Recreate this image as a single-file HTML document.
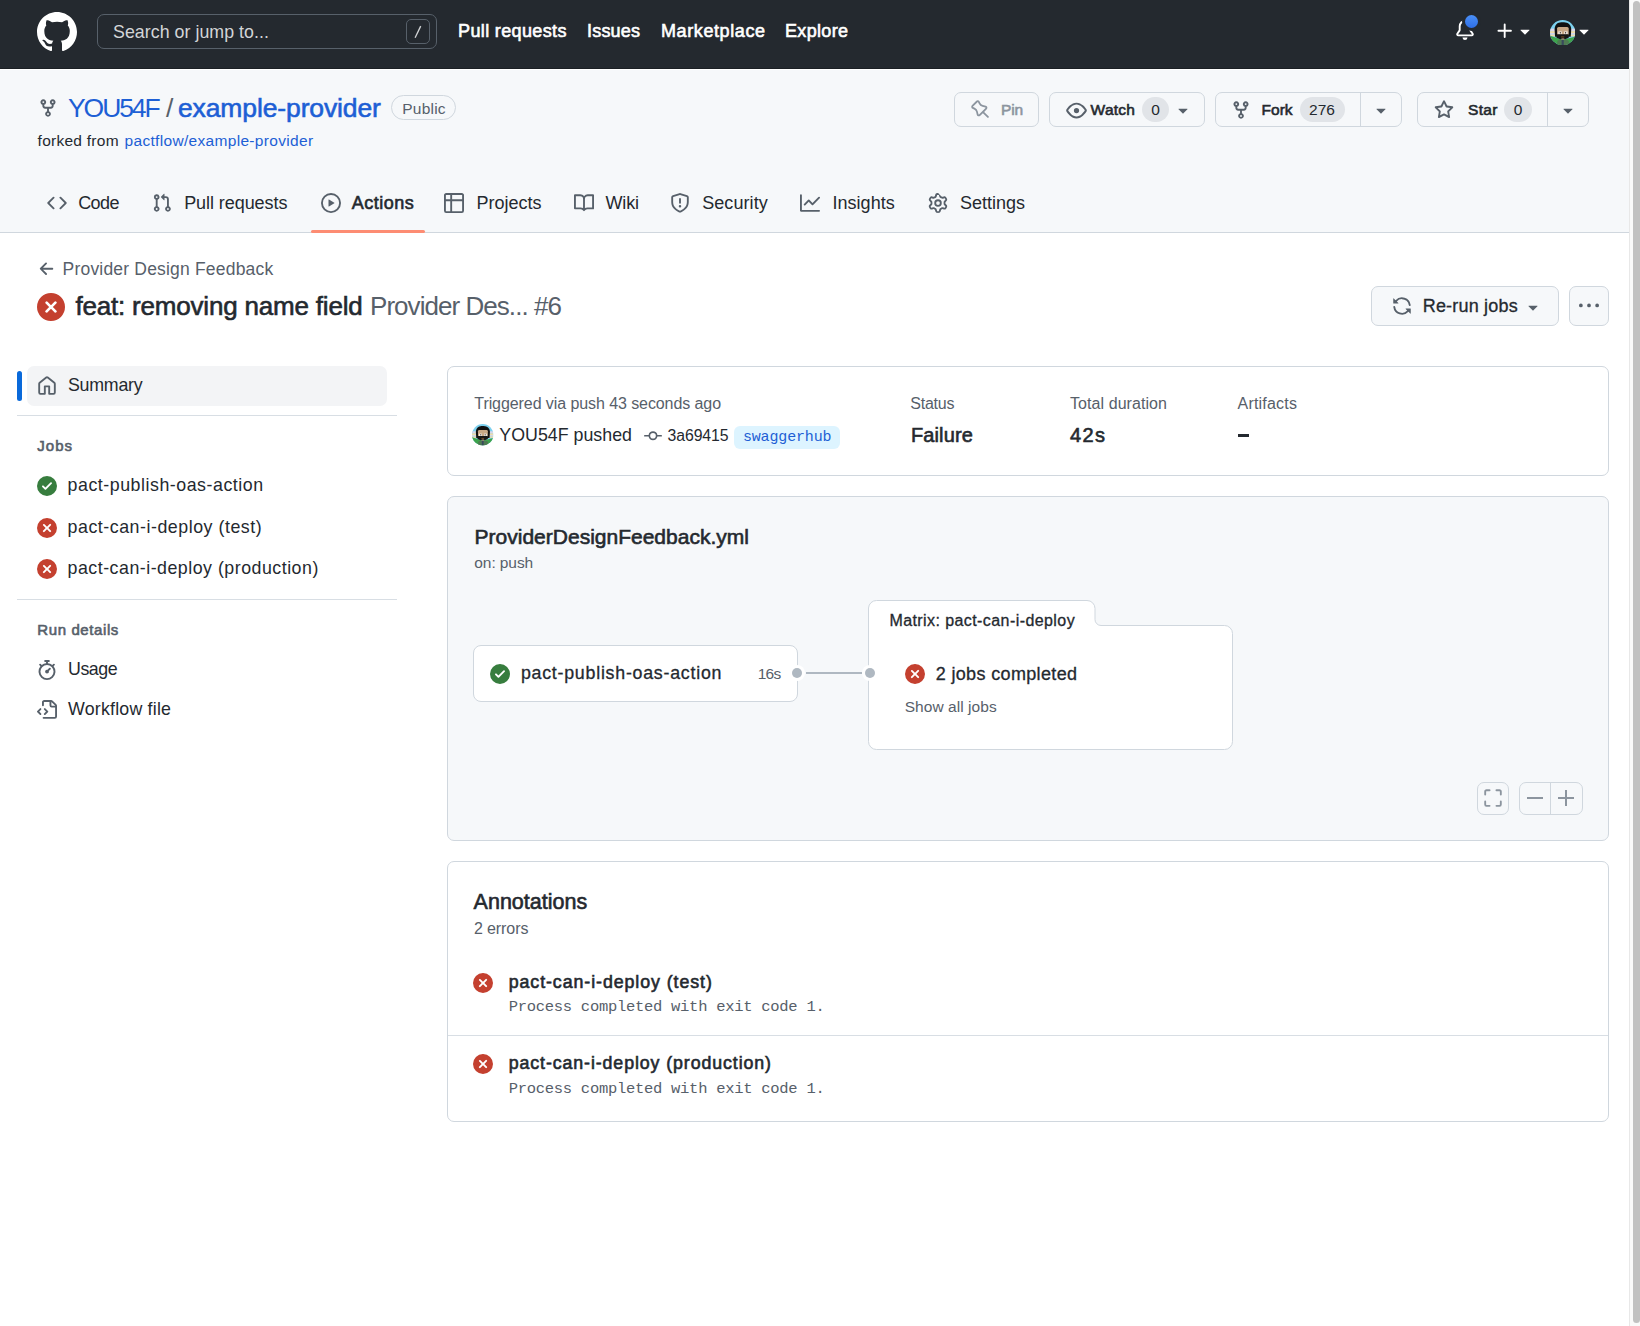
<!DOCTYPE html>
<html><head><meta charset="utf-8"><style>
*{box-sizing:border-box}
html,body{margin:0;padding:0;width:1640px;height:1326px;overflow:hidden;background:#fff}
body{font-family:"Liberation Sans",sans-serif;color:#24292f;position:relative}
.a{position:absolute}
.t{position:absolute;white-space:pre;line-height:1}
.i{position:absolute;display:block}
#hdr{position:absolute;left:0;top:0;width:1629px;height:69px;background:#24292f;border-bottom:1px solid #1b1f24}
#hdrw{position:absolute;left:0;top:69px;width:1629px;height:1px;background:#fff}
#repo{position:absolute;left:0;top:70px;width:1629px;height:163px;background:#f6f8fa;border-bottom:1px solid #d0d7de}
#sb{position:absolute;left:1629px;top:0;width:11px;height:1326px;background:#fafafa;border-left:1px solid #e8e8e8}
#sb .th{position:absolute;left:3px;top:1px;width:7px;height:1322px;background:#c1c1c1;border-radius:4px}
.btn{position:absolute;border:1px solid #d0d7de;border-radius:7px;background:#f6f8fa;height:35px}
.box{position:absolute;border:1px solid #d0d7de;border-radius:7px;background:#fff}
</style></head><body>
<div id="hdr"></div><div id="hdrw"></div>
<div id="repo"></div>
<svg class="i" style="left:37px;top:12px;" width="40" height="40" viewBox="0 0 16 16" fill="#ffffff" fill-rule="evenodd"><path d="M8 0C3.58 0 0 3.58 0 8c0 3.54 2.29 6.53 5.47 7.59.4.07.55-.17.55-.38 0-.19-.01-.82-.01-1.49-2.01.37-2.53-.49-2.69-.94-.09-.23-.48-.94-.82-1.13-.28-.15-.68-.52-.01-.53.63-.01 1.08.58 1.23.82.72 1.21 1.870.87 2.33.66.07-.52.28-.87.51-1.07-1.78-.2-3.64-.89-3.64-3.95 0-.87.31-1.59.82-2.15-.08-.2-.36-1.02.08-2.12 0 0 .67-.21 2.2.82.64-.18 1.32-.27 2-.27.68 0 1.36.09 2 .27 1.53-1.04 2.2-.82 2.2-.82.44 1.1.16 1.92.08 2.12.51.56.82 1.27.82 2.15 0 3.070-1.87 3.75-3.65 3.95.29.25.54.73.54 1.48 0 1.07-.01 1.93-.01 2.2 0 .21.15.46.55.38A8.013 8.013 0 0016 8c0-4.42-3.58-8-8-8z"/></svg>
<div class="a" style="left:97px;top:14px;width:340px;height:35px;border:1px solid #57606a;border-radius:7px"></div>
<div class="a" style="left:406px;top:19px;width:24px;height:25px;border:1px solid #57606a;border-radius:5px"></div>
<svg class="i" style="left:410px;top:22px" width="16" height="18"><line x1="10.7" y1="4.1" x2="5.1" y2="15.8" stroke="#d3d5d7" stroke-width="1.3"/></svg>
<svg class="i" style="left:1455px;top:20px;" width="20" height="20" viewBox="0 0 16 16" fill="#ffffff" fill-rule="evenodd"><path d="M8 16a2 2 0 001.985-1.75c.017-.137-.097-.25-.235-.25h-3.5c-.138 0-.252.113-.235.25A2 2 0 008 16zM3 5a5 5 0 0110 0v2.947c0 .05.015.098.042.139l1.703 2.555A1.518 1.518 0 0113.482 13H2.518a1.518 1.518 0 01-1.263-2.36l1.703-2.554A.25.25 0 003 7.947V5zm5-3.5A3.5 3.5 0 004.5 5v2.947c0 .346-.102.683-.294.97l-1.703 2.556a.018.018 0 00-.003.01l.001.006c0 .002.002.004.004.006a.017.017 0 00.006.004l.007.001h10.964l.007-.001a.016.016 0 00.006-.004.016.016 0 00.004-.006l.001-.007a.017.017 0 00-.003-.01l-1.703-2.554a1.75 1.75 0 01-.294-.97V5A3.5 3.5 0 008 1.5z"/></svg>
<div class="a" style="left:1462px;top:12px;width:19px;height:19px;border-radius:50%;background:#3b82f6;border:3px solid #24292f;background:linear-gradient(#4a8ff7,#2f6fe6)"></div>
<svg class="i" style="left:1495px;top:20.5px;" width="20" height="20" viewBox="0 0 16 16" fill="#ffffff" fill-rule="evenodd"><path d="M7.75 2a.75.75 0 01.75.75V7h4.25a.75.75 0 110 1.5H8.5v4.25a.75.75 0 11-1.5 0V8.5H2.75a.75.75 0 010-1.5H7V2.75A.75.75 0 017.75 2z"/></svg>
<svg class="i" style="left:1515px;top:21px;" width="20" height="20" viewBox="0 0 16 16" fill="#ffffff" fill-rule="evenodd"><path d="M4.427 7.427l3.396 3.396a.25.25 0 00.354 0l3.396-3.396A.25.25 0 0011.396 7H4.604a.25.25 0 00-.177.427z"/></svg>
<svg class="i" style="left:1550px;top:20px" width="25.3" height="25.3" viewBox="0 0 25 25"><defs><clipPath id="cp1550"><circle cx="12.5" cy="12.5" r="12.5"/></clipPath></defs><g clip-path="url(#cp1550)"><rect width="25" height="25" fill="#7cd0ee"/><rect y="8.5" width="25" height="2.5" fill="#d9d6ea"/><rect y="11" width="25" height="2" fill="#efdcaa"/><rect y="13" width="25" height="1.6" fill="#d9d6ea"/><rect y="14.6" width="25" height="1.6" fill="#efdcaa"/><path d="M0 15.5 L12.5 19.5 L12.5 25 L0 25 Z" fill="#3ea34c"/><path d="M25 16.5 L12.5 19.5 L12.5 25 L25 25 Z" fill="#3ea34c"/><path d="M4.5 9 C5 3 9 2.3 12.5 2.3 C16 2.3 20.5 3 21 9 L20.5 16.5 L5 16.5 Z" fill="#111"/><rect x="7" y="7" width="11.5" height="8.5" rx="1.5" fill="#c8a886"/><rect x="8.3" y="11.3" width="3.2" height="2.8" fill="#f4f4f4"/><rect x="14.1" y="11.3" width="3.2" height="2.8" fill="#f4f4f4"/><rect x="9.6" y="11.8" width="1.2" height="1.6" fill="#5a4a3a"/><rect x="14.8" y="11.8" width="1.2" height="1.6" fill="#5a4a3a"/><path d="M6.4 14 H18.5 V17.5 L15 19 H10 L6.4 17.5 Z" fill="#161616"/><rect x="11" y="16.3" width="3.1" height="0.9" fill="#8a5a2a"/><rect x="11.3" y="18.2" width="2.8" height="2" fill="#b89a7c"/><path d="M7.2 25 L7.2 21 Q8 19.6 11 19.6 L14.5 19.6 Q17.8 19.6 18.7 21 L18.7 25 Z" fill="#4f7a52"/><rect x="11.5" y="19.6" width="2.1" height="5.4" fill="#39485e"/></g></svg>
<svg class="i" style="left:1574px;top:21px;" width="20" height="20" viewBox="0 0 16 16" fill="#ffffff" fill-rule="evenodd"><path d="M4.427 7.427l3.396 3.396a.25.25 0 00.354 0l3.396-3.396A.25.25 0 0011.396 7H4.604a.25.25 0 00-.177.427z"/></svg>
<svg class="i" style="left:37.5px;top:98px;" width="20" height="20" viewBox="0 0 16 16" fill="#57606a" fill-rule="evenodd"><path d="M5 5.372v.878c0 .414.336.75.75.75h4.5a.75.75 0 00.75-.75v-.878a2.25 2.25 0 111.5 0v.878a2.25 2.25 0 01-2.25 2.25h-1.5v2.128a2.251 2.251 0 11-1.5 0V8.5h-1.5A2.25 2.25 0 013.5 6.25v-.878a2.25 2.25 0 111.5 0zM5 3.25a.75.75 0 10-1.5 0 .75.75 0 001.5 0zm6.75.75a.75.75 0 100-1.5.75.75 0 000 1.5zm-3 8.75a.75.75 0 10-1.5 0 .75.75 0 001.5 0z"/></svg>
<div class="a" style="left:391px;top:95px;width:65px;height:25px;border:1px solid #d0d7de;border-radius:13px"></div>
<div class="btn" style="left:954px;top:92px;width:85px"></div>
<svg class="i" style="left:971px;top:100px;" width="19" height="19" viewBox="0 0 16 16" fill="#8c959f" fill-rule="evenodd"><path d="M4.456.734a1.75 1.75 0 012.826.504l.613 1.327a3.081 3.081 0 002.084 1.707l2.454.584c1.332.317 1.8 1.972.832 2.94L11.06 10l3.72 3.72a.75.75 0 11-1.061 1.06L10 11.06l-2.204 2.205c-.968.968-2.623.5-2.94-.832l-.584-2.454a3.081 3.081 0 00-1.707-2.084l-1.327-.613a1.75 1.75 0 01-.504-2.826L4.456.734zM5.92 1.866a.25.25 0 00-.404-.072L1.794 5.516a.25.25 0 00.072.404l1.328.613A4.582 4.582 0 015.73 9.63l.584 2.454a.25.25 0 00.42.12l5.47-5.47a.25.25 0 00-.12-.42L9.63 5.73a4.581 4.581 0 01-3.098-2.537L5.92 1.866z"/></svg>
<div class="btn" style="left:1049px;top:92px;width:156px"></div>
<svg class="i" style="left:1065.5px;top:100px;" width="21" height="21" viewBox="0 0 16 16" fill="#57606a" fill-rule="evenodd"><path d="M1.679 7.932c.412-.621 1.242-1.75 2.366-2.717C5.175 4.242 6.527 3.5 8 3.5c1.473 0 2.824.742 3.955 1.715 1.124.967 1.954 2.096 2.366 2.717a.119.119 0 010 .136c-.412.621-1.242 1.75-2.366 2.717C10.825 11.758 9.473 12.5 8 12.5c-1.473 0-2.824-.742-3.955-1.715C2.92 9.818 2.09 8.690 1.679 8.068a.119.119 0 010-.136zM8 2c-1.981 0-3.67.992-4.933 2.078C1.797 5.169.88 6.423.43 7.1a1.619 1.619 0 000 1.798c.45.678 1.367 1.932 2.637 3.024C4.329 13.008 6.019 14 8 14c1.981 0 3.67-.992 4.933-2.078 1.27-1.091 2.187-2.345 2.637-3.023a1.619 1.619 0 000-1.798c-.45-.678-1.367-1.932-2.637-3.023C11.671 2.992 9.981 2 8 2zm0 8a2 2 0 100-4 2 2 0 000 4z"/></svg>
<div class="a" style="left:1142px;top:97px;width:27px;height:25px;border-radius:13px;background:#e1e4e8"></div>
<svg class="i" style="left:1173px;top:100px;" width="20" height="20" viewBox="0 0 16 16" fill="#57606a" fill-rule="evenodd"><path d="M4.427 7.427l3.396 3.396a.25.25 0 00.354 0l3.396-3.396A.25.25 0 0011.396 7H4.604a.25.25 0 00-.177.427z"/></svg>
<div class="btn" style="left:1215px;top:92px;width:187px"></div>
<div class="a" style="left:1360px;top:92px;width:1px;height:35px;background:#d0d7de"></div>
<svg class="i" style="left:1230.5px;top:100px;" width="20" height="20" viewBox="0 0 16 16" fill="#57606a" fill-rule="evenodd"><path d="M5 5.372v.878c0 .414.336.75.75.75h4.5a.75.75 0 00.75-.75v-.878a2.25 2.25 0 111.5 0v.878a2.25 2.25 0 01-2.25 2.25h-1.5v2.128a2.251 2.251 0 11-1.5 0V8.5h-1.5A2.25 2.25 0 013.5 6.25v-.878a2.25 2.25 0 111.5 0zM5 3.25a.75.75 0 10-1.5 0 .75.75 0 001.5 0zm6.75.75a.75.75 0 100-1.5.75.75 0 000 1.5zm-3 8.75a.75.75 0 10-1.5 0 .75.75 0 001.5 0z"/></svg>
<div class="a" style="left:1300px;top:97px;width:45px;height:25px;border-radius:13px;background:#e1e4e8"></div>
<svg class="i" style="left:1370.5px;top:100px;" width="20" height="20" viewBox="0 0 16 16" fill="#57606a" fill-rule="evenodd"><path d="M4.427 7.427l3.396 3.396a.25.25 0 00.354 0l3.396-3.396A.25.25 0 0011.396 7H4.604a.25.25 0 00-.177.427z"/></svg>
<div class="btn" style="left:1417px;top:92px;width:172px"></div>
<div class="a" style="left:1547px;top:92px;width:1px;height:35px;background:#d0d7de"></div>
<svg class="i" style="left:1434px;top:100px;" width="20" height="20" viewBox="0 0 16 16" fill="#57606a" fill-rule="evenodd"><path d="M8 .25a.75.75 0 01.673.418l1.882 3.815 4.21.612a.75.75 0 01.416 1.279l-3.046 2.97.719 4.192a.75.75 0 01-1.088.791L8 12.347l-3.766 1.98a.75.75 0 01-1.088-.79l.72-4.194L.818 6.374a.75.75 0 01.416-1.28l4.21-.611L7.327.668A.75.75 0 018 .25zm0 2.445L6.615 5.5a.75.75 0 01-.564.41l-3.097.45 2.24 2.184a.75.75 0 01.216.664l-.528 3.084 2.769-1.456a.75.75 0 01.698 0l2.77 1.456-.53-3.084a.75.75 0 01.216-.664l2.24-2.183-3.096-.45a.75.75 0 01-.564-.41L8 2.694v.001z"/></svg>
<div class="a" style="left:1504px;top:97px;width:28px;height:25px;border-radius:13px;background:#e1e4e8"></div>
<svg class="i" style="left:1557.5px;top:100px;" width="20" height="20" viewBox="0 0 16 16" fill="#57606a" fill-rule="evenodd"><path d="M4.427 7.427l3.396 3.396a.25.25 0 00.354 0l3.396-3.396A.25.25 0 0011.396 7H4.604a.25.25 0 00-.177.427z"/></svg>
<svg class="i" style="left:47px;top:193px;" width="20" height="20" viewBox="0 0 16 16" fill="#57606a" fill-rule="evenodd"><path d="M4.72 3.22a.75.75 0 011.06 1.06L2.06 8l3.72 3.72a.75.75 0 11-1.06 1.06L.47 8.53a.75.75 0 010-1.06l4.25-4.25zm6.56 0a.75.75 0 10-1.06 1.06L13.94 8l-3.72 3.720a.75.75 0 101.06 1.06l4.25-4.25a.75.75 0 000-1.06l-4.25-4.25z"/></svg>
<svg class="i" style="left:151.5px;top:193px;" width="20" height="20" viewBox="0 0 16 16" fill="#57606a" fill-rule="evenodd"><path d="M7.177 3.073L9.573.677A.25.25 0 0110 .854v4.792a.25.25 0 01-.427.177L7.177 3.427a.25.25 0 010-.354zM3.75 2.5a.75.75 0 100 1.5.75.75 0 000-1.5zm-2.25.75a2.25 2.25 0 113 2.122v5.256a2.251 2.251 0 11-1.5 0V5.372A2.25 2.25 0 011.5 3.25zM11 2.5h-1V4h1a1 1 0 011 1v5.628a2.251 2.251 0 101.5 0V5A2.5 2.5 0 0011 2.5zm1 10.25a.75.75 0 111.5 0 .75.75 0 01-1.5 0zM3.75 12a.75.75 0 100 1.5.75.75 0 000-1.5z"/></svg>
<svg class="i" style="left:320.75px;top:193px;" width="20" height="20" viewBox="0 0 16 16" fill="#57606a" fill-rule="evenodd"><path d="M1.5 8a6.5 6.5 0 1113 0 6.5 6.5 0 01-13 0zM8 0a8 8 0 100 16A8 8 0 008 0zM6.379 5.227A.25.25 0 006 5.442v5.117a.25.25 0 00.379.214l4.264-2.559a.25.25 0 000-.428L6.379 5.227z"/></svg>
<svg class="i" style="left:444px;top:193px;" width="20" height="20" viewBox="0 0 16 16" fill="#57606a" fill-rule="evenodd"><path d="M0 1.75C0 .784.784 0 1.75 0h12.5C15.216 0 16 .784 16 1.75v12.5A1.75 1.75 0 0114.25 16H1.75A1.75 1.75 0 010 14.250V1.75zM6.5 6.5v8h7.75a.25.25 0 00.25-.25V6.5h-8zm8-1.5V1.750a.25.25 0 00-.25-.25H6.5V5h8zM5 1.5H1.75a.25.25 0 00-.25.25V5H5V1.5zm-3.5 5v7.75c0 .138.112.25.25.25H5v-8H1.5z"/></svg>
<svg class="i" style="left:574px;top:193px;" width="20" height="20" viewBox="0 0 16 16" fill="#57606a" fill-rule="evenodd"><path d="M0 1.75A.75.75 0 01.75 1h4.253c1.227 0 2.317.59 3 1.501A3.744 3.744 0 0111.006 1h4.245a.75.75 0 01.75.75v10.5a.75.75 0 01-.75.75h-4.507a2.25 2.25 0 00-1.591.659l-.622.621a.75.75 0 01-1.06 0l-.622-.621A2.25 2.25 0 005.258 13H.75a.75.75 0 01-.75-.75V1.75zm8.755 3a2.25 2.25 0 012.25-2.25H14.5v9h-3.757c-.71 0-1.4.201-1.992.572l.004-7.322zm-1.504 7.324l.004-5.073-.002-2.253A2.25 2.25 0 005.003 2.5H1.5v9h3.757a3.75 3.75 0 011.994.574z"/></svg>
<svg class="i" style="left:670px;top:193px;" width="20" height="20" viewBox="0 0 16 16" fill="#57606a" fill-rule="evenodd"><path d="M7.467.133a1.75 1.75 0 011.066 0l5.25 1.68A1.75 1.75 0 0115 3.48V7c0 1.566-.32 3.182-1.303 4.682-.983 1.498-2.585 2.813-5.032 3.855a1.7 1.7 0 01-1.33 0c-2.447-1.042-4.049-2.357-5.032-3.855C1.32 10.182 1 8.566 1 7V3.48a1.75 1.75 0 011.217-1.667l5.25-1.68zm.61 1.429a.25.25 0 00-.153 0l-5.25 1.68a.25.25 0 00-.174.238V7c0 1.358.275 2.666 1.057 3.86.784 1.194 2.121 2.34 4.366 3.297a.2.2 0 00.154 0c2.245-.956 3.582-2.104 4.366-3.298C13.225 9.666 13.5 8.36 13.5 7V3.48a.25.25 0 00-.174-.237l-5.25-1.68zM9 10.5a1 1 0 11-2 0 1 1 0 012 0zm-.25-5.75a.75.75 0 10-1.5 0v3a.75.75 0 001.5 0v-3z"/></svg>
<svg class="i" style="left:800px;top:193px;" width="20" height="20" viewBox="0 0 16 16" fill="#57606a" fill-rule="evenodd"><path d="M1.5 1.75a.75.75 0 00-1.5 0v12.5c0 .414.336.75.75.75h14.5a.75.75 0 000-1.5H1.5V1.75zm14.28 2.53a.75.75 0 00-1.06-1.060L10 7.94 7.53 5.47a.75.75 0 00-1.06 0L3.22 8.72a.75.75 0 001.06 1.06L7 7.06l2.47 2.47a.75.75 0 001.06 0l5.25-5.25z"/></svg>
<svg class="i" style="left:928px;top:193px;" width="20" height="20" viewBox="0 0 16 16" fill="#57606a" fill-rule="evenodd"><path d="M7.429 1.525a6.593 6.593 0 011.142 0c.036.003.108.036.137.146l.289 1.105c.147.561.549.967.998 1.204.17.086.334.183.49.29.417.282.97.423 1.53.27l1.102-.303c.11-.03.175.016.195.046.219.31.41.641.573.989.014.031.022.11-.059.19l-.815.806c-.411.406-.562.957-.53 1.456a4.588 4.588 0 010 .582c-.032.499.119 1.05.53 1.456l.815.806c.08.08.073.159.059.19a6.494 6.494 0 01-.573.99c-.02.029-.086.074-.195.045l-1.103-.303c-.559-.153-1.112-.012-1.529.27-.156.107-.32.204-.49.29-.449.236-.851.643-.998 1.204l-.289 1.105c-.029.11-.101.143-.137.146a6.613 6.613 0 01-1.142 0c-.036-.003-.108-.037-.137-.146l-.289-1.105c-.147-.561-.549-.967-.998-1.204a4.502 4.502 0 01-.49-.29c-.417-.282-.97-.423-1.53-.27l-1.102.303c-.11.03-.175-.016-.195-.046a6.492 6.492 0 01-.573-.989c-.014-.031-.022-.11.059-.19l.815-.806c.411-.406.562-.957.53-1.456a4.587 4.587 0 010-.582c.032-.499-.119-1.05-.53-1.456l-.815-.806c-.08-.08-.073-.159-.059-.19a6.44 6.44 0 01.573-.99c.02-.029.086-.075.195-.045l1.103.303c.559.153 1.112.012 1.529-.27.156-.107.32-.204.49-.29.449-.236.851-.643.998-1.204l.289-1.105c.029-.11.101-.143.137-.146zM8 0c-.236 0-.47.01-.701.03-.743.065-1.29.615-1.458 1.261l-.29 1.106c-.017.066-.078.158-.211.229a5.96 5.96 0 00-.613.363c-.125.085-.235.09-.3.073l-1.102-.303c-.644-.176-1.392.021-1.82.63a8.12 8.12 0 00-.704 1.217c-.315.675-.111 1.422.363 1.891l.815.806c.05.048.098.147.088.294a6.084 6.084 0 000 .727c.01.147-.038.246-.088.294l-.815.806c-.474.469-.678 1.216-.363 1.891.2.428.436.835.704 1.218.428.609 1.176.806 1.82.63l1.103-.303c.066-.019.176-.011.3.071.196.133.401.254.613.363.133.071.194.163.212.229l.289 1.106c.169.646.715 1.196 1.458 1.26a8.094 8.094 0 001.402 0c.743-.064 1.29-.614 1.458-1.26l.29-1.106c.017-.066.078-.158.211-.229a5.98 5.98 0 00.613-.363c.125-.085.235-.09.3-.073l1.102.303c.644.176 1.392-.021 1.82-.63.268-.382.505-.789.704-1.217.315-.675.111-1.422-.364-1.891l-.814-.806c-.05-.048-.098-.147-.088-.294a6.1 6.1 0 000-.727c-.01-.147.039-.246.088-.294l.814-.806c.475-.469.679-1.216.364-1.891a8.1 8.1 0 00-.704-1.218c-.428-.609-1.176-.806-1.82-.63l-1.103.303c-.066.019-.176.011-.3-.071a5.991 5.991 0 00-.613-.363c-.133-.071-.194-.163-.212-.229L9.16 1.29C8.99.645 8.444.095 7.701.031A8.094 8.094 0 008 0zm1.5 8a1.5 1.5 0 11-3 0 1.5 1.5 0 013 0zM11 8a3 3 0 11-6 0 3 3 0 016 0z"/></svg>
<div class="a" style="left:311px;top:229.5px;width:114px;height:3px;background:#fd8c73;border-radius:2px"></div>
<svg class="i" style="left:36.5px;top:258.5px;" width="20" height="20" viewBox="0 0 16 16" fill="#57606a" fill-rule="evenodd"><path d="M7.78 12.53a.75.75 0 01-1.06 0L2.47 8.28a.75.75 0 010-1.06l4.25-4.25a.75.75 0 011.06 1.06L4.81 7h7.440a.75.75 0 010 1.5H4.81l2.97 2.97a.75.75 0 010 1.06z"/></svg>
<svg class="i" style="left:37px;top:292.5px;" width="28" height="28" viewBox="0 0 16 16" fill="#c4402f" fill-rule="evenodd"><path d="M2.343 13.657A8 8 0 1113.657 2.343 8 8 0 012.343 13.657zM6.03 4.97a.75.75 0 00-1.06 1.06L6.94 8 4.97 9.970a.75.75 0 101.06 1.06L8 9.06l1.97 1.97a.75.75 0 101.06-1.06L9.06 8l1.97-1.97a.75.75 0 10-1.06-1.06L8 6.94 6.03 4.97z"/></svg>
<div class="btn" style="left:1371px;top:286px;width:188px;height:40px"></div>
<svg class="i" style="left:1392px;top:295.5px;" width="20" height="20" viewBox="0 0 16 16" fill="#57606a" fill-rule="evenodd"><path d="M1.705 8.005a.75.75 0 01.834.656 5.5 5.5 0 009.592 2.97l-1.204-1.204a.25.25 0 01.177-.427h3.646a.25.25 0 01.25.25v3.646a.25.25 0 01-.427.177l-1.38-1.38A7.001 7.001 0 011.05 8.84a.75.75 0 01.656-.834zM8 2.5a5.487 5.487 0 00-4.131 1.869l1.204 1.204A.25.25 0 014.896 6H1.25A.25.25 0 011 5.75V2.104a.25.25 0 01.427-.177l1.38 1.38A7.001 7.001 0 0114.95 7.16a.75.75 0 11-1.49.178A5.501 5.501 0 008 2.5z"/></svg>
<svg class="i" style="left:1523px;top:297px;" width="20" height="20" viewBox="0 0 16 16" fill="#57606a" fill-rule="evenodd"><path d="M4.427 7.427l3.396 3.396a.25.25 0 00.354 0l3.396-3.396A.25.25 0 0011.396 7H4.604a.25.25 0 00-.177.427z"/></svg>
<div class="btn" style="left:1569px;top:286px;width:40px;height:40px"></div>
<svg class="i" style="left:1579px;top:296px;" width="20" height="20" viewBox="0 0 16 16" fill="#57606a" fill-rule="evenodd"><path d="M8 9a1.5 1.5 0 100-3 1.5 1.5 0 000 3zM1.5 9a1.5 1.5 0 100-3 1.5 1.5 0 000 3zm13 0a1.5 1.5 0 100-3 1.5 1.5 0 000 3z"/></svg>
<div class="a" style="left:27px;top:366px;width:360px;height:40px;border-radius:7px;background:#f3f4f6"></div>
<div class="a" style="left:17px;top:371px;width:5px;height:30px;border-radius:3px;background:#0969da"></div>
<svg class="i" style="left:37px;top:376px;" width="20" height="20" viewBox="0 0 16 16" fill="#57606a" fill-rule="evenodd"><path d="M6.906.664a1.749 1.749 0 012.187 0l5.25 4.2c.415.332.657.835.657 1.367v7.019A1.75 1.75 0 0113.25 15h-3.5a.75.75 0 01-.75-.75V9H7v5.25a.75.75 0 01-.75.75h-3.5A1.75 1.75 0 011 13.25V6.23c0-.531.242-1.034.657-1.366l5.25-4.2h-.001zm1.25 1.171a.25.25 0 00-.312 0l-5.25 4.2a.25.25 0 00-.094.196v7.019c0 .138.112.25.25.25H5.5V8.25a.75.75 0 01.75-.75h3.5a.75.75 0 01.75.75v5.25h2.75a.25.25 0 00.25-.25V6.23a.25.25 0 00-.094-.195l-5.25-4.2z"/></svg>
<div class="a" style="left:17px;top:415px;width:380px;height:1px;background:#d8dee4"></div>
<svg class="i" style="left:37px;top:476px;" width="20" height="20" viewBox="0 0 16 16" fill="#377d3e" fill-rule="evenodd"><path d="M8 16A8 8 0 108 0a8 8 0 000 16zm3.78-9.72a.75.75 0 00-1.060-1.06L6.75 9.19 5.28 7.72a.75.75 0 00-1.06 1.06l2 2a.75.75 0 001.06 0l4.5-4.5z"/></svg>
<svg class="i" style="left:37px;top:518px;" width="20" height="20" viewBox="0 0 16 16" fill="#c4402f" fill-rule="evenodd"><path d="M2.343 13.657A8 8 0 1113.657 2.343 8 8 0 012.343 13.657zM6.03 4.97a.75.75 0 00-1.06 1.06L6.94 8 4.97 9.970a.75.75 0 101.06 1.06L8 9.06l1.97 1.97a.75.75 0 101.06-1.06L9.06 8l1.97-1.97a.75.75 0 10-1.06-1.06L8 6.94 6.03 4.97z"/></svg>
<svg class="i" style="left:37px;top:559px;" width="20" height="20" viewBox="0 0 16 16" fill="#c4402f" fill-rule="evenodd"><path d="M2.343 13.657A8 8 0 1113.657 2.343 8 8 0 012.343 13.657zM6.03 4.97a.75.75 0 00-1.06 1.06L6.94 8 4.97 9.970a.75.75 0 101.06 1.06L8 9.06l1.97 1.97a.75.75 0 101.06-1.06L9.06 8l1.97-1.97a.75.75 0 10-1.06-1.06L8 6.94 6.03 4.97z"/></svg>
<div class="a" style="left:17px;top:599px;width:380px;height:1px;background:#d8dee4"></div>
<svg class="i" style="left:37px;top:660px;" width="20" height="20" viewBox="0 0 16 16" fill="#57606a" fill-rule="evenodd"><path d="M5.75.75A.75.75 0 016.5 0h3a.75.75 0 010 1.5h-.75v1l-.001.041a6.718 6.718 0 013.464 1.435l.007-.006.75-.75a.75.75 0 111.06 1.06l-.75.75-.006.007a6.75 6.75 0 11-10.548 0L2.72 5.03l-.75-.75a.75.75 0 011.06-1.060l.75.75.007.006A6.718 6.718 0 017.25 2.541a.756.756 0 010-.041v-1H6.5a.75.75 0 01-.75-.75zM8 14.5A5.25 5.25 0 108 4a5.25 5.25 0 000 10.5zm.389-6.7l1.33-1.33a.75.75 0 111.061 1.06L9.45 8.861A1.502 1.502 0 018 10.75a1.5 1.5 0 11.389-2.95z"/></svg>
<svg class="i" style="left:37px;top:700px;" width="20" height="20" viewBox="0 0 16 16" fill="#57606a" fill-rule="evenodd"><path d="M4 1.75C4 .784 4.784 0 5.75 0h5.586c.464 0 .909.184 1.237.513l2.914 2.914c.329.328.513.773.513 1.237v8.586A1.75 1.75 0 0114.25 15h-9a.75.75 0 010-1.5h9a.25.25 0 00.25-.25V6h-2.75A1.75 1.75 0 0110 4.25V1.5H5.750a.25.25 0 00-.25.25v2.5a.75.75 0 01-1.5 0v-2.5zm7.5-.188V4.25c0 .138.112.25.25.25h2.688a.252.252 0 00-.011-.013l-2.914-2.914a.272.272 0 00-.013-.011zM5.72 6.72a.75.75 0 000 1.06l1.47 1.47-1.47 1.47a.75.75 0 101.06 1.06l2-2a.75.75 0 000-1.06l-2-2a.75.75 0 00-1.06 0zM3.28 7.78a.75.75 0 00-1.06-1.06l-2 2a.75.75 0 000 1.06l2 2a.75.75 0 001.06-1.06L1.81 9.25l1.47-1.47z"/></svg>
<div class="box" style="left:447px;top:366px;width:1162px;height:110px"></div>
<svg class="i" style="left:472.4px;top:424.3px" width="21.4" height="21.4" viewBox="0 0 25 25"><defs><clipPath id="cp472"><circle cx="12.5" cy="12.5" r="12.5"/></clipPath></defs><g clip-path="url(#cp472)"><rect width="25" height="25" fill="#7cd0ee"/><rect y="8.5" width="25" height="2.5" fill="#d9d6ea"/><rect y="11" width="25" height="2" fill="#efdcaa"/><rect y="13" width="25" height="1.6" fill="#d9d6ea"/><rect y="14.6" width="25" height="1.6" fill="#efdcaa"/><path d="M0 15.5 L12.5 19.5 L12.5 25 L0 25 Z" fill="#3ea34c"/><path d="M25 16.5 L12.5 19.5 L12.5 25 L25 25 Z" fill="#3ea34c"/><path d="M4.5 9 C5 3 9 2.3 12.5 2.3 C16 2.3 20.5 3 21 9 L20.5 16.5 L5 16.5 Z" fill="#111"/><rect x="7" y="7" width="11.5" height="8.5" rx="1.5" fill="#c8a886"/><rect x="8.3" y="11.3" width="3.2" height="2.8" fill="#f4f4f4"/><rect x="14.1" y="11.3" width="3.2" height="2.8" fill="#f4f4f4"/><rect x="9.6" y="11.8" width="1.2" height="1.6" fill="#5a4a3a"/><rect x="14.8" y="11.8" width="1.2" height="1.6" fill="#5a4a3a"/><path d="M6.4 14 H18.5 V17.5 L15 19 H10 L6.4 17.5 Z" fill="#161616"/><rect x="11" y="16.3" width="3.1" height="0.9" fill="#8a5a2a"/><rect x="11.3" y="18.2" width="2.8" height="2" fill="#b89a7c"/><path d="M7.2 25 L7.2 21 Q8 19.6 11 19.6 L14.5 19.6 Q17.8 19.6 18.7 21 L18.7 25 Z" fill="#4f7a52"/><rect x="11.5" y="19.6" width="2.1" height="5.4" fill="#39485e"/></g></svg>
<svg class="i" style="left:643.5px;top:427px;" width="18" height="18" viewBox="0 0 16 16" fill="#57606a" fill-rule="evenodd"><path d="M10.5 7.75a2.5 2.5 0 11-5 0 2.5 2.5 0 015 0zm1.43.75a4.002 4.002 0 01-7.86 0H.75a.75.75 0 110-1.5h3.32a4.001 4.001 0 017.86 0h3.32a.75.75 0 110 1.5h-3.32z"/></svg>
<div class="a" style="left:734px;top:426px;width:106px;height:23px;border-radius:6px;background:#ddf4ff"></div>
<div class="a" style="left:1238px;top:434px;width:11px;height:2.5px;background:#24292f"></div>
<div class="box" style="left:447px;top:496px;width:1162px;height:345px;background:#f6f8fa"></div>
<div class="a" style="left:473px;top:645px;width:325px;height:57px;border:1px solid #d0d7de;border-radius:8px;background:#fff"></div>
<svg class="i" style="left:490px;top:664px;" width="20" height="20" viewBox="0 0 16 16" fill="#377d3e" fill-rule="evenodd"><path d="M8 16A8 8 0 108 0a8 8 0 000 16zm3.78-9.72a.75.75 0 00-1.060-1.06L6.75 9.19 5.28 7.72a.75.75 0 00-1.06 1.06l2 2a.75.75 0 001.06 0l4.5-4.5z"/></svg>
<div class="a" style="left:806px;top:672px;width:56px;height:2px;background:#afb8c1"></div>
<svg class="i" style="left:860px;top:592px" width="382" height="166"><path d="M8.5 16 A8 8 0 0 1 16.5 8.5 H227 A8 8 0 0 1 235 16.5 V27.5 A6 6 0 0 0 241 33.5 H364.5 A8 8 0 0 1 372.5 41.5 V149.5 A8 8 0 0 1 364.5 157.5 H16.5 A8 8 0 0 1 8.5 149.5 Z" fill="#fff" stroke="#d0d7de" stroke-width="1"/></svg>
<svg class="i" style="left:905px;top:664px;" width="20" height="20" viewBox="0 0 16 16" fill="#c4402f" fill-rule="evenodd"><path d="M2.343 13.657A8 8 0 1113.657 2.343 8 8 0 012.343 13.657zM6.03 4.97a.75.75 0 00-1.06 1.06L6.94 8 4.97 9.970a.75.75 0 101.06 1.06L8 9.06l1.97 1.97a.75.75 0 101.06-1.06L9.06 8l1.97-1.97a.75.75 0 10-1.06-1.06L8 6.94 6.03 4.97z"/></svg>
<div class="a" style="left:789px;top:665px;width:16px;height:16px;border-radius:50%;background:#fff"></div>
<div class="a" style="left:792px;top:668px;width:10px;height:10px;border-radius:50%;background:#afb8c1"></div>
<div class="a" style="left:862px;top:665px;width:16px;height:16px;border-radius:50%;background:#fff"></div>
<div class="a" style="left:865px;top:668px;width:10px;height:10px;border-radius:50%;background:#afb8c1"></div>
<div class="a" style="left:1477px;top:782px;width:32px;height:33px;border:1px solid #d0d7de;border-radius:7px;background:#f6f8fa"></div>
<svg class="i" style="left:1483px;top:788px;" width="20" height="20" viewBox="0 0 16 16" fill="#8c959f" fill-rule="evenodd"><path d="M1.75 10a.75.75 0 01.75.75v2.5c0 .138.112.25.25.25h2.5a.75.75 0 010 1.5h-2.5A1.75 1.75 0 011 13.25v-2.5a.75.75 0 01.75-.75zm12.5 0a.75.75 0 01.75.75v2.5A1.75 1.75 0 0113.25 15h-2.5a.75.75 0 010-1.5h2.5a.25.25 0 00.25-.25v-2.5a.75.75 0 01.75-.75zM2.75 2.5a.25.25 0 00-.25.25v2.5a.75.75 0 01-1.5 0v-2.5C1 1.784 1.784 1 2.75 1h2.5a.75.75 0 010 1.5h-2.5zM10 1.75a.75.75 0 01.75-.75h2.5c.966 0 1.75.784 1.75 1.75v2.5a.75.75 0 01-1.5 0v-2.5a.25.25 0 00-.25-.25h-2.5a.75.75 0 01-.75-.75z"/></svg>
<div class="a" style="left:1519px;top:782px;width:64px;height:33px;border:1px solid #d0d7de;border-radius:7px;background:#f6f8fa"></div>
<div class="a" style="left:1550px;top:782px;width:1px;height:33px;background:#d0d7de"></div>
<div class="a" style="left:1527px;top:796.5px;width:16px;height:2px;background:#8c959f"></div>
<div class="a" style="left:1558px;top:796.5px;width:16px;height:2px;background:#8c959f"></div>
<div class="a" style="left:1565px;top:790px;width:2px;height:16px;background:#8c959f"></div>
<div class="box" style="left:447px;top:861px;width:1162px;height:261px"></div>
<svg class="i" style="left:473px;top:973px;" width="20" height="20" viewBox="0 0 16 16" fill="#c4402f" fill-rule="evenodd"><path d="M2.343 13.657A8 8 0 1113.657 2.343 8 8 0 012.343 13.657zM6.03 4.97a.75.75 0 00-1.06 1.06L6.94 8 4.97 9.970a.75.75 0 101.06 1.06L8 9.06l1.97 1.97a.75.75 0 101.06-1.06L9.06 8l1.97-1.97a.75.75 0 10-1.06-1.06L8 6.94 6.03 4.97z"/></svg>
<div class="a" style="left:448px;top:1035px;width:1160px;height:1px;background:#d8dee4"></div>
<svg class="i" style="left:473px;top:1054px;" width="20" height="20" viewBox="0 0 16 16" fill="#c4402f" fill-rule="evenodd"><path d="M2.343 13.657A8 8 0 1113.657 2.343 8 8 0 012.343 13.657zM6.03 4.97a.75.75 0 00-1.06 1.06L6.94 8 4.97 9.970a.75.75 0 101.06 1.06L8 9.06l1.97 1.97a.75.75 0 101.06-1.06L9.06 8l1.97-1.97a.75.75 0 10-1.06-1.06L8 6.94 6.03 4.97z"/></svg>
<div class="t" style="left:113.0px;top:23.9px;font-size:17.8px;color:#d3d5d7;letter-spacing:0.04px">Search or jump to...</div>
<div class="t" style="left:458.0px;top:21.7px;font-size:18px;color:#ffffff;letter-spacing:0.37px;-webkit-text-stroke:0.6px">Pull requests</div>
<div class="t" style="left:587.0px;top:21.7px;font-size:18px;color:#ffffff;letter-spacing:0.19px;-webkit-text-stroke:0.6px">Issues</div>
<div class="t" style="left:661.0px;top:21.7px;font-size:18px;color:#ffffff;letter-spacing:0.60px;-webkit-text-stroke:0.6px">Marketplace</div>
<div class="t" style="left:785.0px;top:21.7px;font-size:18px;color:#ffffff;letter-spacing:0.33px;-webkit-text-stroke:0.6px">Explore</div>
<div class="t" style="left:68.0px;top:94.8px;font-size:26.5px;color:#1d5fd5;letter-spacing:-2.08px">YOU54F</div>
<div class="t" style="left:166.0px;top:94.8px;font-size:26.5px;color:#57606a">/</div>
<div class="t" style="left:178.0px;top:94.8px;font-size:26.5px;color:#1d5fd5;letter-spacing:-0.12px;-webkit-text-stroke:0.6px">example-provider</div>
<div class="t" style="left:402.3px;top:100.7px;font-size:15.5px;color:#57606a;letter-spacing:0.22px">Public</div>
<div class="t" style="left:37.6px;top:133.2px;font-size:15.5px;color:#24292f;letter-spacing:0.26px">forked from</div>
<div class="t" style="left:124.5px;top:133.2px;font-size:15.5px;color:#1d5fd5;letter-spacing:0.32px">pactflow/example-provider</div>
<div class="t" style="left:1001.0px;top:102.0px;font-size:15.5px;color:#8c959f;letter-spacing:-0.20px;-webkit-text-stroke:0.6px">Pin</div>
<div class="t" style="left:1090.6px;top:102.0px;font-size:15.5px;color:#24292f;letter-spacing:0.26px;-webkit-text-stroke:0.6px">Watch</div>
<div class="t" style="left:1151.2px;top:102.0px;font-size:15.5px;color:#24292f">0</div>
<div class="t" style="left:1261.6px;top:102.0px;font-size:15.5px;color:#24292f;-webkit-text-stroke:0.6px">Fork</div>
<div class="t" style="left:1309.0px;top:102.0px;font-size:15.5px;color:#24292f;letter-spacing:0.06px">276</div>
<div class="t" style="left:1468.0px;top:102.0px;font-size:15.5px;color:#24292f;letter-spacing:0.29px;-webkit-text-stroke:0.6px">Star</div>
<div class="t" style="left:1513.7px;top:102.0px;font-size:15.5px;color:#24292f">0</div>
<div class="t" style="left:78.2px;top:194.4px;font-size:18px;color:#24292f;letter-spacing:-0.59px">Code</div>
<div class="t" style="left:184.2px;top:194.4px;font-size:18px;color:#24292f;letter-spacing:-0.07px">Pull requests</div>
<div class="t" style="left:351.8px;top:194.4px;font-size:18px;color:#24292f;letter-spacing:0.49px;-webkit-text-stroke:0.6px">Actions</div>
<div class="t" style="left:476.5px;top:194.4px;font-size:18px;color:#24292f">Projects</div>
<div class="t" style="left:605.5px;top:194.4px;font-size:18px;color:#24292f;letter-spacing:-0.17px">Wiki</div>
<div class="t" style="left:702.2px;top:194.4px;font-size:18px;color:#24292f;letter-spacing:0.07px">Security</div>
<div class="t" style="left:832.4px;top:194.4px;font-size:18px;color:#24292f;letter-spacing:0.05px">Insights</div>
<div class="t" style="left:960.0px;top:194.4px;font-size:18px;color:#24292f">Settings</div>
<div class="t" style="left:62.6px;top:260.8px;font-size:17.5px;color:#57606a;letter-spacing:0.19px">Provider Design Feedback</div>
<div class="t" style="left:75.4px;top:292.9px;font-size:26px;color:#24292f;letter-spacing:-0.19px;-webkit-text-stroke:0.6px">feat: removing name field</div>
<div class="t" style="left:370.0px;top:292.9px;font-size:26px;color:#57606a;letter-spacing:-0.95px">Provider Des... #6</div>
<div class="t" style="left:1422.7px;top:296.5px;font-size:18px;color:#24292f;letter-spacing:0.20px;-webkit-text-stroke:0.3px">Re-run jobs</div>
<div class="t" style="left:67.9px;top:376.6px;font-size:17.8px;color:#24292f;letter-spacing:-0.21px">Summary</div>
<div class="t" style="left:37.3px;top:438.1px;font-size:15px;color:#57606a;letter-spacing:1.00px;-webkit-text-stroke:0.6px">Jobs</div>
<div class="t" style="left:67.6px;top:477.2px;font-size:17.8px;color:#24292f;letter-spacing:0.53px">pact-publish-oas-action</div>
<div class="t" style="left:67.6px;top:518.8px;font-size:17.8px;color:#24292f;letter-spacing:0.53px">pact-can-i-deploy (test)</div>
<div class="t" style="left:67.6px;top:559.8px;font-size:17.8px;color:#24292f;letter-spacing:0.50px">pact-can-i-deploy (production)</div>
<div class="t" style="left:37.3px;top:621.5px;font-size:15px;color:#57606a;letter-spacing:0.60px;-webkit-text-stroke:0.6px">Run details</div>
<div class="t" style="left:68.0px;top:660.8px;font-size:17.8px;color:#24292f;letter-spacing:-0.43px">Usage</div>
<div class="t" style="left:68.0px;top:701.2px;font-size:17.8px;color:#24292f;letter-spacing:0.21px">Workflow file</div>
<div class="t" style="left:474.3px;top:395.6px;font-size:16px;color:#57606a;letter-spacing:-0.08px">Triggered via push 43 seconds ago</div>
<div class="t" style="left:499.3px;top:427.1px;font-size:17.8px;color:#24292f;letter-spacing:0.02px">YOU54F pushed</div>
<div class="t" style="left:667.6px;top:427.6px;font-size:15.8px;color:#24292f;letter-spacing:-0.10px">3a69415</div>
<div class="t" style="left:742.9px;top:430.3px;font-size:15px;color:#1d5fd5;font-family:'Liberation Mono';letter-spacing:-0.15px">swaggerhub</div>
<div class="t" style="left:910.2px;top:395.6px;font-size:16px;color:#57606a;letter-spacing:-0.21px">Status</div>
<div class="t" style="left:911.0px;top:424.5px;font-size:20px;color:#24292f;letter-spacing:0.11px;-webkit-text-stroke:0.6px">Failure</div>
<div class="t" style="left:1070.0px;top:395.6px;font-size:16px;color:#57606a;letter-spacing:0.07px">Total duration</div>
<div class="t" style="left:1070.0px;top:424.5px;font-size:20px;color:#24292f;letter-spacing:1.43px;-webkit-text-stroke:0.6px">42s</div>
<div class="t" style="left:1237.6px;top:395.6px;font-size:16px;color:#57606a;letter-spacing:0.19px">Artifacts</div>
<div class="t" style="left:474.6px;top:526.4px;font-size:21px;color:#24292f;-webkit-text-stroke:0.6px">ProviderDesignFeedback.yml</div>
<div class="t" style="left:474.3px;top:554.8px;font-size:15.5px;color:#57606a;letter-spacing:-0.08px">on: push</div>
<div class="t" style="left:520.9px;top:665.2px;font-size:17.8px;color:#24292f;letter-spacing:0.76px;-webkit-text-stroke:0.3px">pact-publish-oas-action</div>
<div class="t" style="left:757.7px;top:665.8px;font-size:15.5px;color:#57606a;letter-spacing:-0.70px">16s</div>
<div class="t" style="left:889.4px;top:612.9px;font-size:16px;color:#24292f;letter-spacing:0.42px;-webkit-text-stroke:0.3px">Matrix: pact-can-i-deploy</div>
<div class="t" style="left:935.7px;top:664.7px;font-size:18px;color:#24292f;letter-spacing:0.35px;-webkit-text-stroke:0.3px">2 jobs completed</div>
<div class="t" style="left:904.7px;top:699.1px;font-size:15.5px;color:#57606a;letter-spacing:0.06px">Show all jobs</div>
<div class="t" style="left:473.6px;top:892.0px;font-size:21.5px;color:#24292f;-webkit-text-stroke:0.6px">Annotations</div>
<div class="t" style="left:473.9px;top:920.7px;font-size:16px;color:#57606a;letter-spacing:-0.09px">2 errors</div>
<div class="t" style="left:508.7px;top:973.8px;font-size:17.8px;color:#24292f;letter-spacing:0.93px;-webkit-text-stroke:0.6px">pact-can-i-deploy (test)</div>
<div class="t" style="left:508.7px;top:1000.2px;font-size:15.5px;color:#57606a;font-family:'Liberation Mono';letter-spacing:-0.28px">Process completed with exit code 1.</div>
<div class="t" style="left:508.7px;top:1055.2px;font-size:17.8px;color:#24292f;letter-spacing:0.90px;-webkit-text-stroke:0.6px">pact-can-i-deploy (production)</div>
<div class="t" style="left:508.7px;top:1081.9px;font-size:15.5px;color:#57606a;font-family:'Liberation Mono';letter-spacing:-0.28px">Process completed with exit code 1.</div>
<div id="sb"><div class="th"></div></div>
</body></html>
